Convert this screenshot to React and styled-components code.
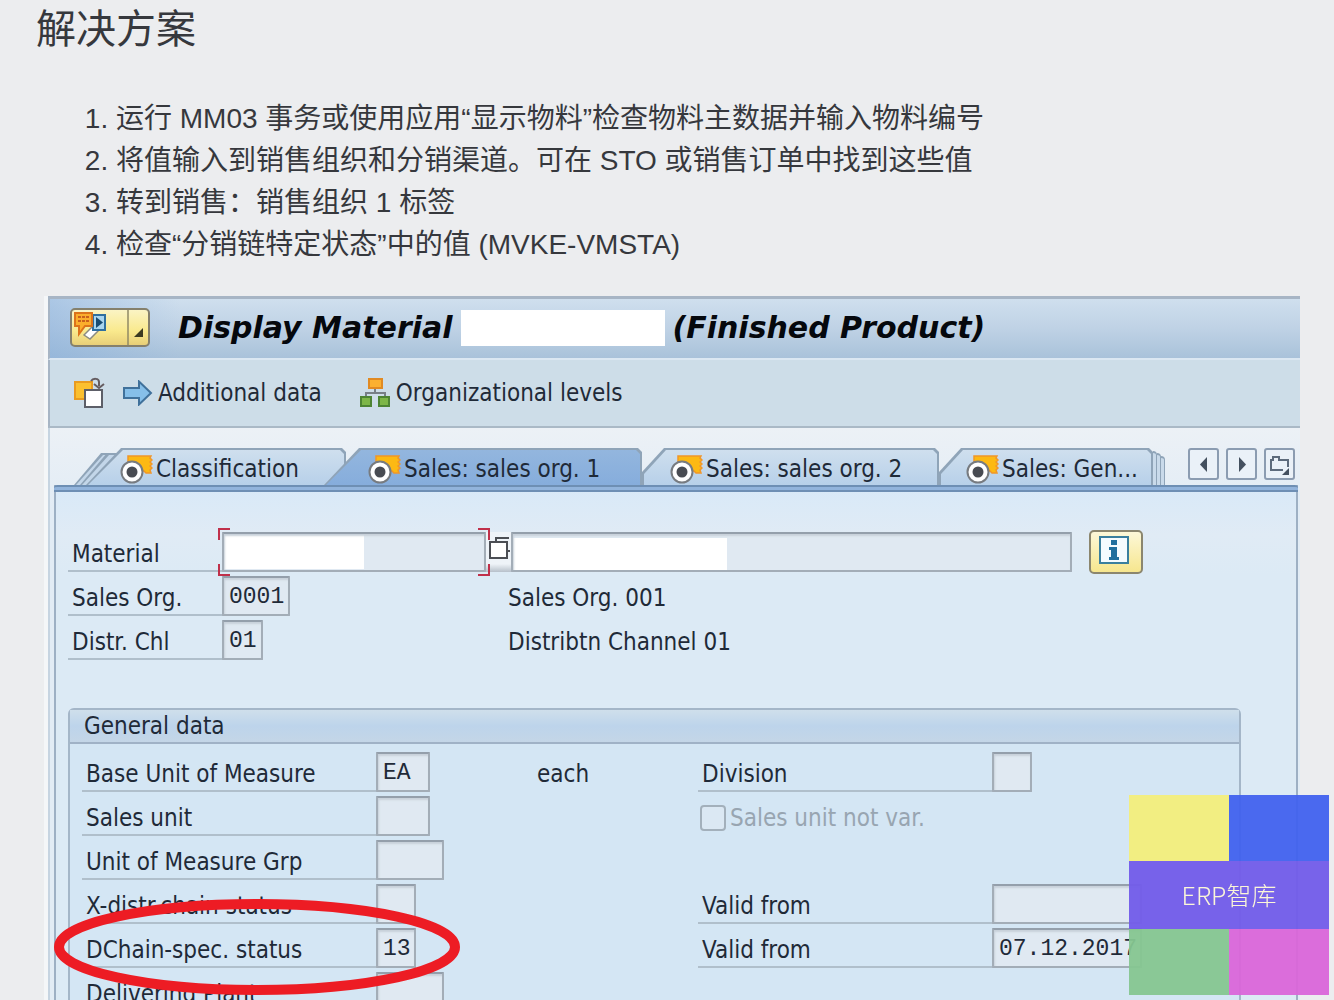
import React from "react";
import styled, { createGlobalStyle, css } from "styled-components";

const line = "#8fa4b8";
const ink = "#1f2a38";

const GlobalStyle = createGlobalStyle`
  *, *::before, *::after { box-sizing: border-box; }
  body {
    margin: 0;
    background: #ecedef;
    color: #36383d;
    font-family: "Liberation Sans", "Noto Sans CJK SC", sans-serif;
  }
  button, input { font: inherit; color: inherit; margin: 0; }
`;

const Page = styled.main`
  height: 100vh;
  overflow: hidden;
  display: flex;
  flex-direction: column;
  padding: 1px 34px 0 36px;
`;

const Heading = styled.h1`
  margin: 0 0 41px;
  font-size: 40px;
  line-height: 56px;
  font-weight: 400;
  flex: none;
`;

const Steps = styled.ol`
  margin: 0 0 30px;
  padding-left: 80px;
  font-size: 28px;
  line-height: 42px;
  flex: none;
`;

const Window = styled.section`
  flex: 1 0 auto;
  margin-left: 8px;
  border-left: 4px solid #f4f6f8;
  background: #dfeaf4;
  color: ${ink};
  font-family: "DejaVu Sans Condensed", "Noto Sans", sans-serif;
  font-size: 24px;
  line-height: 32px;
  display: flex;
  flex-direction: column;
`;

const TitleBar = styled.header`
  display: flex;
  align-items: center;
  height: 64px;
  padding: 0 20px 2px;
  border-top: 3px solid #a7b5c5;
  border-left: 2px solid #a7b5c5;
  border-bottom: 2px solid #dbe7f2;
  background: linear-gradient(90deg, rgba(128, 170, 218, 0.45), rgba(128, 170, 218, 0) 130px),
    linear-gradient(#cfdfee, #bfd2e5 50%, #a9c2da);
`;

const MenuButton = styled.button`
  display: flex;
  flex: none;
  width: 80px;
  height: 39px;
  padding: 0;
  border: 2px solid #85806c;
  border-radius: 5px;
  overflow: hidden;
  background: linear-gradient(#fbf4c4, #f9e98d 60%, #e8cf78);
`;

const Title = styled.h2`
  display: flex;
  align-items: center;
  gap: 8px;
  margin: 0 0 0 28px;
  font-family: "DejaVu Sans", sans-serif;
  font-size: 30px;
  line-height: 38px;
  font-style: italic;
  font-weight: 700;
  color: #05080d;
  white-space: nowrap;
`;

const Redacted = styled.span`
  width: 204px;
  height: 36px;
  background: #fff;
`;

const Toolbar = styled.div`
  display: flex;
  align-items: center;
  gap: 18px;
  height: 68px;
  padding: 0 24px;
  border-left: 2px solid #a7b5c5;
  border-bottom: 2px solid #aab9c6;
  background: #cddde8;
`;

const ToolButton = styled.button`
  display: flex;
  align-items: center;
  gap: 5px;
  padding: 0;
  border: 0;
  background: none;
  white-space: nowrap;
  margin-right: ${(p) => (p.$wide ? "20px" : "0")};
`;

const Body = styled.div`
  flex: 1;
  display: flex;
  flex-direction: column;
  padding: 20px 2px 0 4px;
  border-left: 2px solid #c6d4e1;
  background: linear-gradient(#ecf1f6, #e2ecf5 80px);
`;

const TabStrip = styled.div`
  display: flex;
  align-items: flex-start;
  padding: 0 3px 0 20px;
`;

const slope = css`
  clip-path: polygon(
    0 ${(p) => (p.$cut ? "24px" : "100%")},
    ${(p) => (p.$cut ? "22px" : "35px")} 0,
    calc(100% - 4px) 0,
    100% 4px,
    100% 100%,
    0 100%
  );
`;

const Tab = styled.button`
  position: relative;
  isolation: isolate;
  display: flex;
  align-items: center;
  gap: 3px;
  flex: 0 0 ${(p) => p.$w}px;
  height: 37px;
  padding: 4px 0 0 ${(p) => p.$pad}px;
  margin-left: ${(p) => (p.$over ? `-${p.$over}px` : "0")};
  border: 0;
  background: none;
  white-space: nowrap;
  z-index: ${(p) => (p.$active ? 2 : 1)};

  &::before, &::after {
    content: "";
    position: absolute;
    z-index: -1;
    ${slope}
  }
  &::before { inset: 0; background: ${line}; }
  &::after {
    inset: 2px 2px 0 2px;
    background: ${(p) =>
      p.$active ? "linear-gradient(#93b6de, #86addc)" : "linear-gradient(#cfdfee, #b7d0e9)"};
  }
`;

const FoldLeft = styled.span`
  position: relative;
  flex: 0 0 46px;
  height: 32px;
  margin: 5px -40px 0 0;

  &::before, &::after {
    content: "";
    position: absolute;
    clip-path: polygon(0 100%, 27px 0, 100% 0, 100% 2px, 12px 100%);
  }
  &::before { inset: 0; background: ${line}; }
  &::after { inset: 2px 0 0 2px; background: #c3d6e9; }
`;

const FoldRight = styled.span`
  flex: 0 0 4px;
  height: ${(p) => p.$h}px;
  margin-top: ${(p) => 37 - p.$h}px;
  border: 0 solid ${line};
  border-width: 2px 1px 0 0;
  border-radius: 0 4px 0 0;
  background: #c9daea;
`;

const Scroll = styled.nav`
  display: flex;
  gap: 7px;
  margin-left: auto;
`;

const ScrollButton = styled.button`
  display: grid;
  place-items: center;
  width: 31px;
  height: 32px;
  padding: 0;
  border: 2px solid #8b9cb1;
  border-radius: 3px;
  background: #eaf1f8;
`;

const Panel = styled.div`
  flex: 1;
  border: 1px solid #9db0c4;
  border-width: 0 2px;
  padding: 40px 55px 0 12px;
  background: linear-gradient(#d8e9f8, #e0ebf5 50px, #dceaf5 90px);

  &::before {
    content: "";
    display: block;
    height: 7px;
    margin: -40px -57px 40px -14px;
    border: 2px solid #6e8fb4;
    border-width: 2px 0;
    border-radius: 3px 3px 0 0;
    background: #92b4dc;
  }
`;

const Rows = styled.div`
  display: flex;
  flex-direction: column;
  gap: 4px;
`;

const Row = styled.div`
  position: relative;
  z-index: ${(p) => (p.$front ? 1 : "auto")};
  display: grid;
  grid-template-columns: ${(p) => (p.$group ? "294px 322px 294px 1fr" : "154px 286px 1fr")};
  height: 40px;
`;

const MaterialRow = styled.div`
  display: flex;
  height: 40px;
  padding-right: 98px;
`;

const Label = styled.label`
  flex: none;
  width: ${(p) => (p.$fixed ? "154px" : "auto")};
  padding: 6px 4px 0;
  border-bottom: 2px solid #b0bfcb;
  line-height: 32px;
  white-space: nowrap;
`;

const Cell = styled.div`
  display: flex;
  align-items: center;
  gap: 107px;
`;

const Field = styled.input`
  width: ${(p) => p.$w}px;
  height: 40px;
  padding: 2px 0 0 5px;
  border: 2px solid #a3adb7;
  border-top-color: #949fab;
  border-radius: 1px;
  outline: 0;
  background-color: #e0e9f2;
  box-shadow: inset 1px 2px 2px #c8d1da;
  font-family: "Liberation Mono", monospace;
  font-size: 23px;
`;

const WideField = styled(Field)`
  flex: ${(p) => (p.$grow ? "1 1 0" : "none")};
  min-width: 0;
  background-image: linear-gradient(#fff, #fff);
  background-repeat: no-repeat;
  background-position: 0 ${(p) => (p.$grow ? "4px" : "1px")};
  background-size: ${(p) => p.$mask}px 34px;
`;

const Focus = styled.div`
  position: relative;
  flex: none;
  display: flex;
`;

const Corner = styled.i`
  position: absolute;
  width: 12px;
  height: 12px;
  border: 0 solid #c0304a;
  ${(p) => p.$v}: -4px;
  ${(p) => p.$h}: -4px;
  border-${(p) => p.$v}-width: 2px;
  border-${(p) => p.$h}-width: 2px;
`;

const PickButton = styled.button`
  flex: none;
  width: 25px;
  padding: 0 0 0 2px;
  border: 0;
  background: linear-gradient(#eef3f8 80%, #b7c0ca);
`;

const InfoButton = styled.button`
  display: grid;
  place-items: center;
  flex: none;
  width: 54px;
  height: 44px;
  margin: -2px 0 0 17px;
  padding: 0 4px 4px 0;
  border: 2px solid #8b866e;
  border-radius: 5px;
  background: linear-gradient(#fdf8d8, #f6e68e);
`;

const Note = styled.span`
  padding-top: 4px;
  white-space: nowrap;
`;

const Group = styled.fieldset`
  min-width: 0;
  height: 340px;
  margin: 48px 0 0;
  padding: 0;
  border: 2px solid #a4b6c8;
  border-radius: 6px 6px 0 0;
  background: #d4e6f4;
`;

const GroupTitle = styled.legend`
  float: left;
  width: 100%;
  height: 34px;
  margin-bottom: 8px;
  padding: 0 14px;
  border-bottom: 2px solid #a0b2c6;
  background: linear-gradient(#cfdfeb, #bdd4eb 50%, #c4d6e7);
`;

const GroupRows = styled(Rows)`
  clear: both;
  padding-left: 12px;
`;

const CheckLabel = styled.label`
  display: flex;
  align-items: center;
  gap: 4px;
  padding: 4px 0 0 2px;
  color: #98a5b1;
  white-space: nowrap;
`;

const Check = styled.input`
  appearance: none;
  width: 26px;
  height: 26px;
  border: 2px solid #a3b0bb;
  border-radius: 4px;
  background: #dbe8f3;
`;

const Ring = styled.svg`
  position: absolute;
  left: -28px;
  top: -29px;
  width: 406px;
  height: 97px;
  pointer-events: none;
`;

const Badge = styled.aside`
  position: fixed;
  right: 5px;
  bottom: 5px;
  z-index: 5;
  width: 200px;
  display: grid;
  grid-template: 66px 68px 66px / 1fr 1fr;
`;

const Tile = styled.span`
  background: ${(p) => p.$c};
`;

const BadgeText = styled.strong`
  grid-column: 1 / -1;
  display: grid;
  place-items: center;
  padding-bottom: 2px;
  background: rgba(115, 93, 233, 0.96);
  color: #fbf6d8;
  font-family: "Noto Sans CJK SC", sans-serif;
  font-size: 25px;
  line-height: 36px;
  font-weight: 300;
`;

const ViewIcon = () => (
  <svg width="33" height="32" viewBox="0 0 33 32" fill="none" aria-hidden="true">
    <path
      d="M8 3H31L30 5L32 7L30 9L32 11L30 13L32 15L30 17L31 20H26L24 18H8Z"
      fill="#fdb913"
      stroke="#f0962a"
      strokeWidth="1.500"
    />
    <circle cx="12" cy="19" r="10.500" fill="#fff" stroke="#777b80" strokeWidth="2" />
    <circle cx="12" cy="19" r="5.500" fill="#484b52" />
  </svg>
);

const MenuIcon = () => (
  <svg width="76" height="35" viewBox="0 0 76 35" fill="none" aria-hidden="true">
    <path d="M56 0V35" stroke="#918a65" strokeWidth="1.500" />
    <path d="M71 18V27H62Z" fill="#3c3a20" />
    <path d="M12 25L21 16L26 21L18 29Z" fill="#fff" stroke="#8b8b82" strokeWidth="1.500" />
    <rect x="21" y="5" width="12" height="15" fill="#a9d5ef" stroke="#2f6f9f" strokeWidth="2" />
    <path d="M24 7L31 12.500L24 18Z" fill="#174b73" />
    <path d="M3 3H20V16H13L7 24V16H3Z" fill="#fbae2c" stroke="#dc731b" strokeWidth="2" />
    <path d="M6 7H17M6 11H17" stroke="#c9601c" strokeWidth="2" strokeDasharray="3 1" />
  </svg>
);

const CopyIcon = () => (
  <svg width="31" height="32" viewBox="0 0 31 32" fill="none" aria-hidden="true">
    <path d="M1 5H18V22H1Z" fill="#fbc02f" stroke="#e99b20" strokeWidth="2" />
    <path d="M11 13H28V30H11Z" fill="#fff" stroke="#5d5f68" strokeWidth="2" />
    <path d="M17 4C19 1 25 1 25 5V9M20 7L25 11L30 7" stroke="#655c60" strokeWidth="2" />
  </svg>
);

const ArrowIcon = () => (
  <svg width="30" height="26" viewBox="0 0 30 26" fill="none" aria-hidden="true">
    <path d="M1 8H16V1.500L28 13L16 24.500V18H1Z" fill="#86bfe9" stroke="#40719b" strokeWidth="2" />
  </svg>
);

const OrgIcon = () => (
  <svg width="31" height="30" viewBox="0 0 31 30" fill="none" aria-hidden="true">
    <path d="M15 10V15M6 20V15H25V20" stroke="#777f86" strokeWidth="2" />
    <rect x="9" y="1" width="13" height="9" fill="#fbb030" stroke="#e18a22" strokeWidth="2" />
    <rect x="1" y="19" width="10" height="9" fill="#7db648" stroke="#4d8434" strokeWidth="2" />
    <rect x="19" y="19" width="10" height="9" fill="#7db648" stroke="#4d8434" strokeWidth="2" />
  </svg>
);

const PickIcon = () => (
  <svg width="21" height="24" viewBox="0 0 21 24" fill="none" aria-hidden="true">
    <path d="M7 6V2H20M18 15H21" stroke="#4b4e54" strokeWidth="2" />
    <rect x="1" y="6" width="17" height="16" fill="#fff" stroke="#4b4e54" strokeWidth="2" />
  </svg>
);

const InfoIcon = () => (
  <svg width="32" height="30" viewBox="0 0 32 30" fill="none" aria-hidden="true">
    <rect x="2" y="2" width="28" height="26" fill="#f4fbff" stroke="#3a7f9e" strokeWidth="2" />
    <path d="M13 5H19V10H13ZM11 12H19V22H21V25H11V22H13V15H11Z" fill="#206f9e" />
  </svg>
);

const GlyphIcon = ({ d }) => (
  <svg width="23" height="23" viewBox="0 0 23 23" fill="none" aria-hidden="true">
    <path d={d} fill="#44505f" />
  </svg>
);

const ListIcon = () => (
  <svg width="23" height="23" viewBox="0 0 23 23" fill="none" aria-hidden="true">
    <path d="M15 17H3V7H5V4H11V7H20V14" stroke="#5d6b7c" strokeWidth="2" />
    <path d="M21 15V22H14Z" fill="#44505f" />
  </svg>
);

const steps = [
  "运行 MM03 事务或使用应用“显示物料”检查物料主数据并输入物料编号",
  "将值输入到销售组织和分销渠道。可在 STO 或销售订单中找到这些值",
  "转到销售：销售组织 1 标签",
  "检查“分销链特定状态”中的值 (MVKE-VMSTA)",
];

const tabs = [
  { text: "Classification", w: 260, over: 0, pad: 34 },
  { text: "Sales: sales org. 1", w: 318, over: 22, pad: 44, active: true },
  { text: "Sales: sales org. 2", w: 297, cut: true, pad: 28 },
  { text: "Sales: Gen...", w: 214, cut: true, pad: 27 },
];

const orgRows = [
  { id: "org", label: "Sales Org.", value: "0001", w: 68, note: "Sales Org. 001" },
  { id: "chl", label: "Distr. Chl", value: "01", w: 41, note: "Distribtn Channel 01" },
];

const dataRows = [
  { id: "uom", label: "Base Unit of Measure", value: "EA", w: 54, note: "each", right: { label: "Division", w: 40 } },
  { id: "unit", label: "Sales unit", w: 54, check: "Sales unit not var." },
  { id: "grp", label: "Unit of Measure Grp", w: 68 },
  { id: "xst", label: "X-distr.chain status", w: 40, right: { label: "Valid from", w: 150 } },
  { id: "dst", label: "DChain-spec. status", value: "13", w: 40, ring: true, right: { label: "Valid from", w: 150, value: "07.12.2017" } },
  { id: "plant", label: "Delivering Plant", w: 68 },
];

function DataRow({ row }) {
  const { id, label, value = "", w, note, check, right, ring } = row;
  return (
    <Row $group $front={ring}>
      <Label htmlFor={id}>{label}</Label>
      <Cell>
        <Field id={id} $w={w} value={value} readOnly />
        {note && <Note>{note}</Note>}
      </Cell>
      {check && (
        <CheckLabel>
          <Check type="checkbox" disabled />
          {check}
        </CheckLabel>
      )}
      {right && (
        <>
          <Label htmlFor={id + "-r"}>{right.label}</Label>
          <Cell>
            <Field id={id + "-r"} $w={right.w} value={right.value || ""} readOnly />
          </Cell>
        </>
      )}
      {ring && (
        <Ring viewBox="0 0 406 97" fill="none" aria-hidden="true">
          <ellipse cx="203" cy="48" rx="198" ry="43" stroke="#ed1c24" strokeWidth="10" />
        </Ring>
      )}
    </Row>
  );
}

export default function App() {
  return (
    <>
      <GlobalStyle />
      <Page>
        <Heading>解决方案</Heading>
        <Steps>
          {steps.map((s) => (
            <li key={s}>{s}</li>
          ))}
        </Steps>
        <Window>
          <TitleBar>
            <MenuButton aria-label="Menu">
              <MenuIcon />
            </MenuButton>
            <Title>
              <span>Display Material</span>
              <Redacted />
              <span>(Finished Product)</span>
            </Title>
          </TitleBar>
          <Toolbar>
            <ToolButton aria-label="Other material">
              <CopyIcon />
            </ToolButton>
            <ToolButton $wide>
              <ArrowIcon />
              Additional data
            </ToolButton>
            <ToolButton>
              <OrgIcon />
              Organizational levels
            </ToolButton>
          </Toolbar>
          <Body>
            <TabStrip>
              <FoldLeft />
              <FoldLeft />
              {tabs.map((t) => (
                <Tab key={t.text} $w={t.w} $over={t.over} $active={t.active} $cut={t.cut} $pad={t.pad}>
                  <ViewIcon />
                  {t.text}
                </Tab>
              ))}
              <FoldRight $h={34} />
              <FoldRight $h={32} />
              <FoldRight $h={29} />
              <Scroll>
                <ScrollButton aria-label="Previous tab">
                  <GlyphIcon d="M15 4V19L8 11.500Z" />
                </ScrollButton>
                <ScrollButton aria-label="Next tab">
                  <GlyphIcon d="M9 4V19L16 11.500Z" />
                </ScrollButton>
                <ScrollButton aria-label="Tab list">
                  <ListIcon />
                </ScrollButton>
              </Scroll>
            </TabStrip>
            <Panel>
              <Rows>
                <MaterialRow>
                  <Label $fixed htmlFor="material">Material</Label>
                  <Focus>
                    <WideField id="material" $w={264} $mask={140} readOnly />
                    <Corner $v="top" $h="left" />
                    <Corner $v="bottom" $h="left" />
                    <Corner $v="top" $h="right" />
                    <Corner $v="bottom" $h="right" />
                  </Focus>
                  <PickButton aria-label="Choose material">
                    <PickIcon />
                  </PickButton>
                  <WideField aria-label="Material description" $grow $mask={214} readOnly />
                  <InfoButton aria-label="Information">
                    <InfoIcon />
                  </InfoButton>
                </MaterialRow>
                {orgRows.map((r) => (
                  <Row key={r.id}>
                    <Label htmlFor={r.id}>{r.label}</Label>
                    <Cell>
                      <Field id={r.id} $w={r.w} value={r.value} readOnly />
                    </Cell>
                    <Cell>
                      <Note>{r.note}</Note>
                    </Cell>
                  </Row>
                ))}
              </Rows>
              <Group>
                <GroupTitle>General data</GroupTitle>
                <GroupRows>
                  {dataRows.map((r) => (
                    <DataRow key={r.id} row={r} />
                  ))}
                </GroupRows>
              </Group>
            </Panel>
          </Body>
        </Window>
      </Page>
      <Badge>
        <Tile $c="rgba(243, 238, 123, 0.95)" />
        <Tile $c="rgba(65, 98, 238, 0.95)" />
        <BadgeText>ERP智库</BadgeText>
        <Tile $c="rgba(134, 198, 144, 0.95)" />
        <Tile $c="rgba(218, 102, 217, 0.95)" />
      </Badge>
    </>
  );
}
